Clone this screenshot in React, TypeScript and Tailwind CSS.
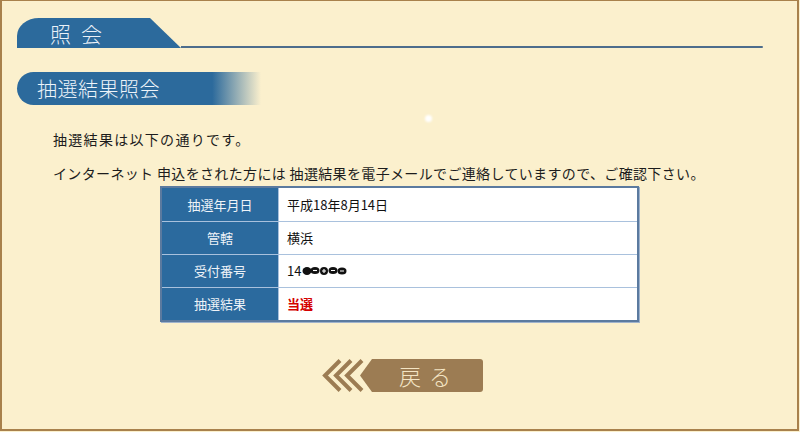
import React from "react";

const jp = "font-['Noto_Sans_CJK_JP','Noto_Sans',sans-serif]";

type Row = { label: string; value: React.ReactNode };

function Redacted() {
  // scribbled-out digits
  return (
    <svg width="46" height="12" viewBox="0 0 46 12" className="ml-[1px]">
      <g fill="#111">
        <ellipse cx="5" cy="6" rx="4.5" ry="4" />
        <ellipse cx="13" cy="5.5" rx="4.5" ry="3.5" />
        <ellipse cx="22" cy="6" rx="4" ry="4" />
        <ellipse cx="31" cy="5.5" rx="4.5" ry="3.5" />
        <ellipse cx="40" cy="6" rx="4.5" ry="3.5" />
      </g>
      <g stroke="#fff" strokeWidth="1.1" fill="none">
        <path d="M20 6h4M22 4v4" />
        <path d="M11 5.5h4" />
        <path d="M29 5.5h4M38 6h4" />
      </g>
    </svg>
  );
}

function BackButton() {
  return (
    <button className="relative ml-[303px] mt-[37px] h-[33px] w-[164px]">
      <svg width="164" height="33" viewBox="0 0 164 33" className="absolute inset-0">
        <g fill="none" stroke="#9c7c53" strokeWidth="4" strokeLinejoin="miter">
          <polyline points="20,1.5 5,16.5 20,31.5" />
          <polyline points="31,1.5 16,16.5 31,31.5" />
          <polyline points="42,1.5 27,16.5 42,31.5" />
        </g>
        <path
          d="M52 0 H160 Q163 0 163 3 V30 Q163 33 160 33 H52 L40 16.5 Z"
          fill="#9c7c53"
        />
      </svg>
      <span
        className={`relative flex h-full items-center justify-center pl-[54px] text-[22px] font-light tracking-[8px] text-[#f4e5c4] ${jp}`}
      >
        戻る
      </span>
    </button>
  );
}

export default function App() {
  const rows: Row[] = [
    { label: "抽選年月日", value: "平成18年8月14日" },
    { label: "管轄", value: "横浜" },
    {
      label: "受付番号",
      value: (
        <span className="flex items-center">
          14
          <Redacted />
        </span>
      ),
    },
    {
      label: "抽選結果",
      value: <span className="font-bold text-[#d40000]">当選</span>,
    },
  ];

  return (
    <div className={`h-[432px] w-[800px] bg-[#fbf0cd] ${jp}`}>
      <div className="relative h-[431px] w-[799px] border-2 border-t border-[#a8814c] pl-[15px] pt-[17px]">
        {/* section header */}
        <div className="flex w-[746px] items-end">
          <div className="flex h-[30px] w-[164px] items-center rounded-tl-[22px_18px] bg-[#2c6a9c] pl-[33px] [clip-path:polygon(0_0,133px_0,164px_100%,0_100%)]">
            <span className="text-[21px] font-light leading-none tracking-[10px] text-[#eaf1f8]">照会</span>
          </div>
          <div className="h-[2px] flex-1 rounded-r-full bg-[#4d6d8c]" />
        </div>

        {/* sub header */}
        <div className="mt-[24px] flex h-[33px] w-[244px] items-center rounded-l-[17px] bg-[linear-gradient(to_right,#2c6a9c_0%,#2c6a9c_80%,rgba(44,106,156,0)_100%)] pl-[20px]">
          <span className="text-[20px] font-light leading-none tracking-[0.5px] text-[#eef4fa]">抽選結果照会</span>
        </div>

        <div className="absolute left-[423px] top-[114px] h-[7px] w-[7px] rounded-full bg-white blur-[1px]" />

        <p className="ml-[36px] mt-[24px] text-[14px] leading-[20px] tracking-[1.3px] text-[#1c1c1c]">
          抽選結果は以下の通りです。
        </p>
        <p className="ml-[36px] mt-[14px] text-[14px] leading-[20px] tracking-[0.35px] text-[#1c1c1c]">
          インターネット 申込をされた方には 抽選結果を電子メールでご連絡していますので、ご確認下さい。
        </p>

        {/* result table */}
        <div className="ml-[143px] mt-[3px] w-[479px] border-2 border-[#5b7a9f] bg-white shadow-[1px_1px_0_#9fb3cc]">
          {rows.map((r, i) => (
            <div
              key={r.label}
              className={`flex h-[33px] ${i > 0 ? "border-t border-[#a9c1dd]" : ""}`}
            >
              <div className="flex w-[117px] items-center justify-center border-r border-[#a9c1dd] bg-[#2b6a9e] text-[13px] text-[#eef3f8]">
                {r.label}
              </div>
              <div className="flex flex-1 items-center pl-[8px] text-[13px] text-[#111]">
                {r.value}
              </div>
            </div>
          ))}
        </div>

        <BackButton />
      </div>
    </div>
  );
}
